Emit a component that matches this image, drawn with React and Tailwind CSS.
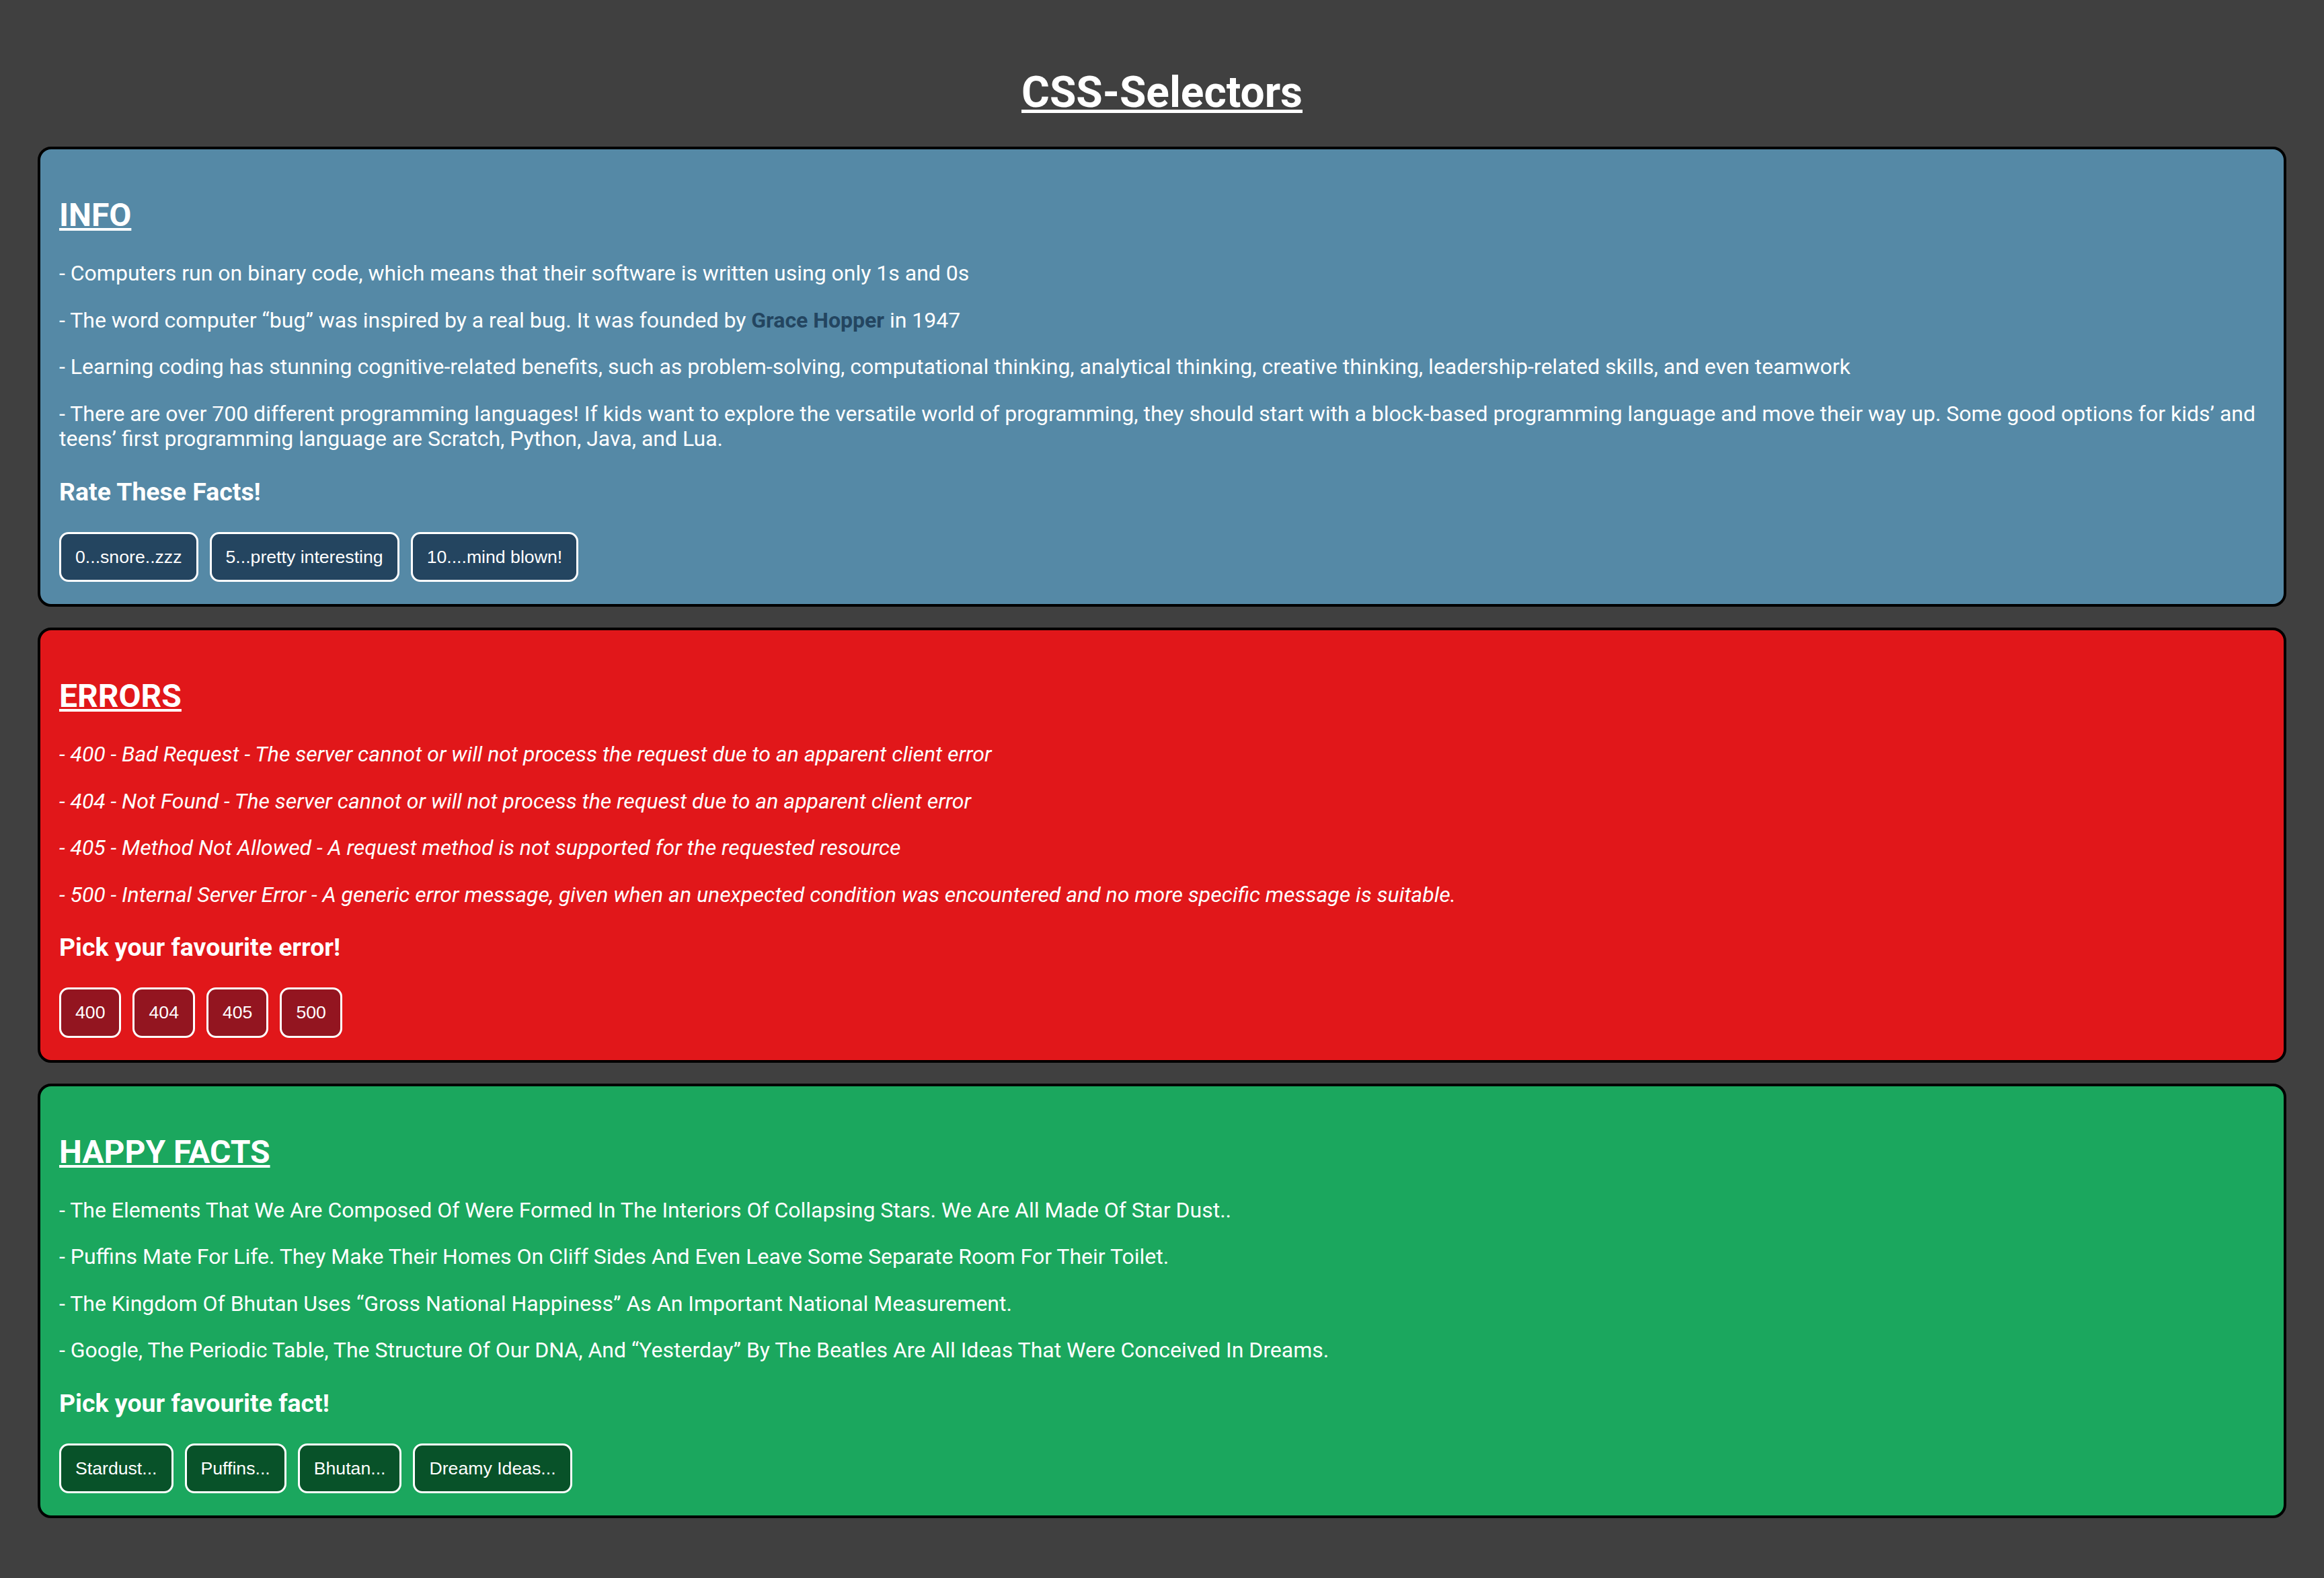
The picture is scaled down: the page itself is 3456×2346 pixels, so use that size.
import React from 'react';

const SECTIONS = [
  {
    id: 'info',
    title: 'INFO',
    card: 'bg-[#5589a6]',
    button: 'bg-[#244560]',
    italic: false,
    facts: [
      '- Computers run on binary code, which means that their software is written using only 1s and 0s',
      'grace',
      '- Learning coding has stunning cognitive-related benefits, such as problem-solving, computational thinking, analytical thinking, creative thinking, leadership-related skills, and even teamwork',
      '- There are over 700 different programming languages! If kids want to explore the versatile world of programming, they should start with a block-based programming language and move their way up. Some good options for kids’ and teens’ first programming language are Scratch, Python, Java, and Lua.',
    ],
    prompt: 'Rate These Facts!',
    options: ['0...snore..zzz', '5...pretty interesting', '10....mind blown!'],
  },
  {
    id: 'errors',
    title: 'ERRORS',
    card: 'bg-[#e1171a]',
    button: 'bg-[#931520]',
    italic: true,
    facts: [
      '- 400 - Bad Request - The server cannot or will not process the request due to an apparent client error',
      '- 404 - Not Found - The server cannot or will not process the request due to an apparent client error',
      '- 405 - Method Not Allowed - A request method is not supported for the requested resource',
      '- 500 - Internal Server Error - A generic error message, given when an unexpected condition was encountered and no more specific message is suitable.',
    ],
    prompt: 'Pick your favourite error!',
    options: ['400', '404', '405', '500'],
  },
  {
    id: 'happy',
    title: 'HAPPY FACTS',
    card: 'bg-[#1ba75e]',
    button: 'bg-[#085229]',
    italic: false,
    facts: [
      '- The Elements That We Are Composed Of Were Formed In The Interiors Of Collapsing Stars. We Are All Made Of Star Dust..',
      '- Puffins Mate For Life. They Make Their Homes On Cliff Sides And Even Leave Some Separate Room For Their Toilet.',
      '- The Kingdom Of Bhutan Uses “Gross National Happiness” As An Important National Measurement.',
      '- Google, The Periodic Table, The Structure Of Our DNA, And “Yesterday” By The Beatles Are All Ideas That Were Conceived In Dreams.',
    ],
    prompt: 'Pick your favourite fact!',
    options: ['Stardust...', 'Puffins...', 'Bhutan...', 'Dreamy Ideas...'],
  },
];

function Fact({ text }) {
  if (text === 'grace') {
    return (
      <>
        - The word computer “bug” was inspired by a real bug. It was founded by{' '}
        <a className="font-bold text-[#234560]">Grace Hopper</a> in 1947
      </>
    );
  }
  return text;
}

function Section({ section }) {
  const { title, card, button, italic, facts, prompt, options } = section;
  return (
    <section className={`rounded-[20px] border-4 border-black px-[28px] pt-[30px] pb-[33px] ${card}`}>
      <h2 className="mt-[40px] mb-[40px] text-[48px] leading-[56px] font-bold underline decoration-4 underline-offset-[3px]">
        {title}
      </h2>
      {facts.map((f, i) => (
        <p
          key={i}
          className={`text-[32px] leading-[37.5px] ${italic ? 'italic' : ''} ${
            i === facts.length - 1 ? 'mb-[37px]' : 'mb-[32px]'
          }`}
        >
          <Fact text={f} />
        </p>
      ))}
      <h3 className="mb-[38px] text-[37.44px] leading-[44px] font-bold">{prompt}</h3>
      <div className="flex gap-[17px]">
        {options.map((o) => (
          <button
            key={o}
            className={`rounded-[14px] border-[3px] border-white px-[21px] py-[19px] text-[26.67px] leading-[30.6px] text-white font-['Liberation_Sans',Arial,sans-serif] ${button}`}
          >
            {o}
          </button>
        ))}
      </div>
    </section>
  );
}

export default function App() {
  return (
    <div className="min-h-screen bg-[#404040] px-[56px] pt-[57px] pb-[89px] font-['Roboto',sans-serif] text-white">
      <h1 className="mt-[43px] mb-[43px] text-center text-[64px] leading-[75px] font-bold underline decoration-[5px] underline-offset-[4px]">
        CSS-Selectors
      </h1>
      <div className="flex flex-col gap-[31px]">
        {SECTIONS.map((s) => (
          <Section key={s.id} section={s} />
        ))}
      </div>
    </div>
  );
}
